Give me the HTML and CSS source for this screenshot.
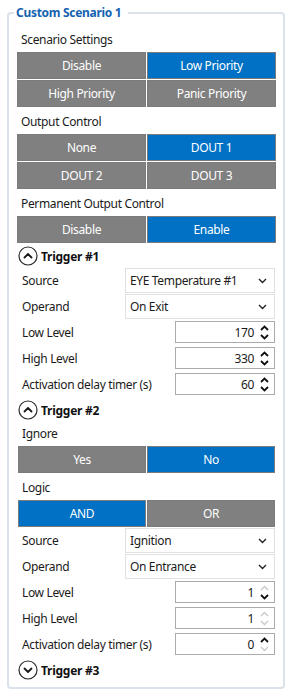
FILE: index.html
```html
<!DOCTYPE html>
<html lang="en">
<head>
<meta charset="utf-8">
<title>Custom Scenario 1</title>
<link rel="stylesheet" href="styles.css">
</head>
<body>
<fieldset class="group">
  <legend class="group-title">Custom Scenario 1</legend>

  <div class="section-label">Scenario Settings</div>
  <div class="seg">
    <div class="seg-btn">Disable</div>
    <div class="seg-btn is-active">Low Priority</div>
    <div class="seg-btn">High Priority</div>
    <div class="seg-btn">Panic Priority</div>
  </div>

  <div class="section-label gap-top">Output Control</div>
  <div class="seg">
    <div class="seg-btn">None</div>
    <div class="seg-btn is-active">DOUT 1</div>
    <div class="seg-btn">DOUT 2</div>
    <div class="seg-btn">DOUT 3</div>
  </div>

  <div class="section-label gap-top">Permanent Output Control</div>
  <div class="seg">
    <div class="seg-btn">Disable</div>
    <div class="seg-btn is-active">Enable</div>
  </div>

  <div class="trigger-head first">
    <svg class="circle-icon" viewBox="0 0 20 20" width="20" height="20"><circle cx="10" cy="10" r="9" fill="none" stroke="#2b2b2b" stroke-width="1.2"/><polyline points="6.5,11.5 10,8 13.5,11.5" fill="none" stroke="#1b1b1b" stroke-width="1.8" stroke-linecap="round" stroke-linejoin="round"/></svg>
    <span>Trigger #1</span>
  </div>
  <div class="field-row select-row">
    <span class="field-label">Source</span>
    <div class="select"><span>EYE Temperature #1</span><svg class="chev" viewBox="0 0 9 6" width="9" height="6"><polyline points="1,1 4.5,4.5 8,1" fill="none" stroke="#222" stroke-width="1.4"/></svg></div>
  </div>
  <div class="field-row select-row tight">
    <span class="field-label">Operand</span>
    <div class="select"><span>On Exit</span><svg class="chev" viewBox="0 0 9 6" width="9" height="6"><polyline points="1,1 4.5,4.5 8,1" fill="none" stroke="#222" stroke-width="1.4"/></svg></div>
  </div>
  <div class="field-row spin-row first-spin">
    <span class="field-label">Low Level</span>
    <div class="spin"><span class="spin-value">170</span><span class="spin-arrows"><svg viewBox="0 0 9 6" width="9" height="6"><polyline points="1,5 4.5,1.5 8,5" fill="none" stroke="#111" stroke-width="1.8"/></svg><svg viewBox="0 0 9 6" width="9" height="6"><polyline points="1,1 4.5,4.5 8,1" fill="none" stroke="#111" stroke-width="1.8"/></svg></span></div>
  </div>
  <div class="field-row spin-row">
    <span class="field-label">High Level</span>
    <div class="spin"><span class="spin-value">330</span><span class="spin-arrows"><svg viewBox="0 0 9 6" width="9" height="6"><polyline points="1,5 4.5,1.5 8,5" fill="none" stroke="#111" stroke-width="1.8"/></svg><svg viewBox="0 0 9 6" width="9" height="6"><polyline points="1,1 4.5,4.5 8,1" fill="none" stroke="#111" stroke-width="1.8"/></svg></span></div>
  </div>
  <div class="field-row spin-row">
    <span class="field-label">Activation delay timer (s)</span>
    <div class="spin"><span class="spin-value">60</span><span class="spin-arrows"><svg viewBox="0 0 9 6" width="9" height="6"><polyline points="1,5 4.5,1.5 8,5" fill="none" stroke="#111" stroke-width="1.8"/></svg><svg viewBox="0 0 9 6" width="9" height="6"><polyline points="1,1 4.5,4.5 8,1" fill="none" stroke="#111" stroke-width="1.8"/></svg></span></div>
  </div>

  <div class="trigger-head">
    <svg class="circle-icon" viewBox="0 0 20 20" width="20" height="20"><circle cx="10" cy="10" r="9" fill="none" stroke="#2b2b2b" stroke-width="1.2"/><polyline points="6.5,11.5 10,8 13.5,11.5" fill="none" stroke="#1b1b1b" stroke-width="1.8" stroke-linecap="round" stroke-linejoin="round"/></svg>
    <span>Trigger #2</span>
  </div>
  <div class="section-label sub">Ignore</div>
  <div class="seg inset">
    <div class="seg-btn">Yes</div>
    <div class="seg-btn is-active">No</div>
  </div>
  <div class="section-label sub gap-top">Logic</div>
  <div class="seg inset">
    <div class="seg-btn is-active">AND</div>
    <div class="seg-btn">OR</div>
  </div>
  <div class="field-row select-row">
    <span class="field-label">Source</span>
    <div class="select"><span>Ignition</span><svg class="chev" viewBox="0 0 9 6" width="9" height="6"><polyline points="1,1 4.5,4.5 8,1" fill="none" stroke="#222" stroke-width="1.4"/></svg></div>
  </div>
  <div class="field-row select-row tight">
    <span class="field-label">Operand</span>
    <div class="select"><span>On Entrance</span><svg class="chev" viewBox="0 0 9 6" width="9" height="6"><polyline points="1,1 4.5,4.5 8,1" fill="none" stroke="#222" stroke-width="1.4"/></svg></div>
  </div>
  <div class="field-row spin-row first-spin">
    <span class="field-label">Low Level</span>
    <div class="spin"><span class="spin-value">1</span><span class="spin-arrows"><svg viewBox="0 0 9 6" width="9" height="6"><polyline points="1,5 4.5,1.5 8,5" fill="none" stroke="#c9c9c9" stroke-width="1.4"/></svg><svg viewBox="0 0 9 6" width="9" height="6"><polyline points="1,1 4.5,4.5 8,1" fill="none" stroke="#111" stroke-width="1.8"/></svg></span></div>
  </div>
  <div class="field-row spin-row">
    <span class="field-label">High Level</span>
    <div class="spin"><span class="spin-value">1</span><span class="spin-arrows"><svg viewBox="0 0 9 6" width="9" height="6"><polyline points="1,5 4.5,1.5 8,5" fill="none" stroke="#c9c9c9" stroke-width="1.4"/></svg><svg viewBox="0 0 9 6" width="9" height="6"><polyline points="1,1 4.5,4.5 8,1" fill="none" stroke="#c9c9c9" stroke-width="1.4"/></svg></span></div>
  </div>
  <div class="field-row spin-row">
    <span class="field-label">Activation delay timer (s)</span>
    <div class="spin"><span class="spin-value">0</span><span class="spin-arrows"><svg viewBox="0 0 9 6" width="9" height="6"><polyline points="1,5 4.5,1.5 8,5" fill="none" stroke="#111" stroke-width="1.8"/></svg><svg viewBox="0 0 9 6" width="9" height="6"><polyline points="1,1 4.5,4.5 8,1" fill="none" stroke="#c9c9c9" stroke-width="1.4"/></svg></span></div>
  </div>

  <div class="trigger-head">
    <svg class="circle-icon" viewBox="0 0 20 20" width="20" height="20"><circle cx="10" cy="10" r="9" fill="none" stroke="#2b2b2b" stroke-width="1.2"/><polyline points="6.5,8.5 10,12 13.5,8.5" fill="none" stroke="#1b1b1b" stroke-width="1.8" stroke-linecap="round" stroke-linejoin="round"/></svg>
    <span>Trigger #3</span>
  </div>
</fieldset>
</body>
</html>
```

FILE: styles.css
```css
html, body {
  margin: 0;
  padding: 0;
  background: #ffffff;
}

body {
  font-family: "Noto Sans", "Open Sans", "DejaVu Sans", sans-serif;
  font-size: 12px;
  letter-spacing: -0.35px;
  color: #1b1b1b;
}

.group {
  margin: 4px 6px 0 7px;
  padding: 6px 7px 6px 8px;
  border: 2px solid #dbe2ea;
  border-radius: 4px;
  min-inline-size: 0;
}

.group-title {
  margin-left: -3px;
  padding: 0 7px 0 2px;
  height: 18px;
  line-height: 18px;
  font-weight: 700;
  font-size: 12px;
  letter-spacing: -0.3px;
  color: #1463b0;
}

.section-label {
  height: 24px;
  line-height: 24px;
  padding-left: 4px;
}

.section-label.sub {
  padding-left: 5px;
  margin-top: 1px;
}

.section-label.gap-top {
  margin-top: 3px;
}

.seg {
  display: grid;
  grid-template-columns: 1fr 1fr;
  grid-auto-rows: 27px;
  gap: 1px;
}

.seg.inset {
  margin: 0 1px;
}

.seg-btn {
  display: flex;
  align-items: center;
  justify-content: center;
  background: #808080;
  border: 1px solid #7b7b7b;
  color: #ffffff;
}

.seg-btn.is-active {
  background: #0071c5;
}

.trigger-head {
  display: flex;
  align-items: center;
  gap: 3px;
  height: 22px;
  margin-top: 4px;
  padding-left: 1px;
  font-weight: 700;
  font-size: 12px;
  letter-spacing: -0.25px;
  color: #111;
}

.trigger-head.first {
  margin-top: 2px;
}

.circle-icon {
  flex: none;
}

.field-row {
  display: flex;
  align-items: center;
  justify-content: space-between;
  padding-left: 5px;
  margin-right: 1px;
}

.field-label {
  white-space: nowrap;
}

.select-row {
  height: 25px;
  margin-top: 1px;
}

.select-row.tight {
  margin-top: 1px;
}

.select {
  box-sizing: border-box;
  width: 150px;
  height: 25px;
  display: flex;
  align-items: center;
  justify-content: space-between;
  padding: 0 7px 0 4px;
  border: 1px solid #e1e1e1;
  background: #ffffff;
}

.chev {
  display: block;
}

.spin-row {
  height: 22px;
  margin-top: 4px;
}

.spin-row.first-spin {
  margin-top: 2px;
}

.spin {
  box-sizing: border-box;
  width: 100px;
  height: 22px;
  display: flex;
  align-items: center;
  justify-content: flex-end;
  border: 1px solid #ababab;
  background: #ffffff;
  padding-right: 5px;
}

.spin-value {
  padding-right: 6px;
}

.spin-arrows {
  display: flex;
  flex-direction: column;
  justify-content: center;
  gap: 3px;
  width: 9px;
}

.spin-arrows svg {
  display: block;
}
```
